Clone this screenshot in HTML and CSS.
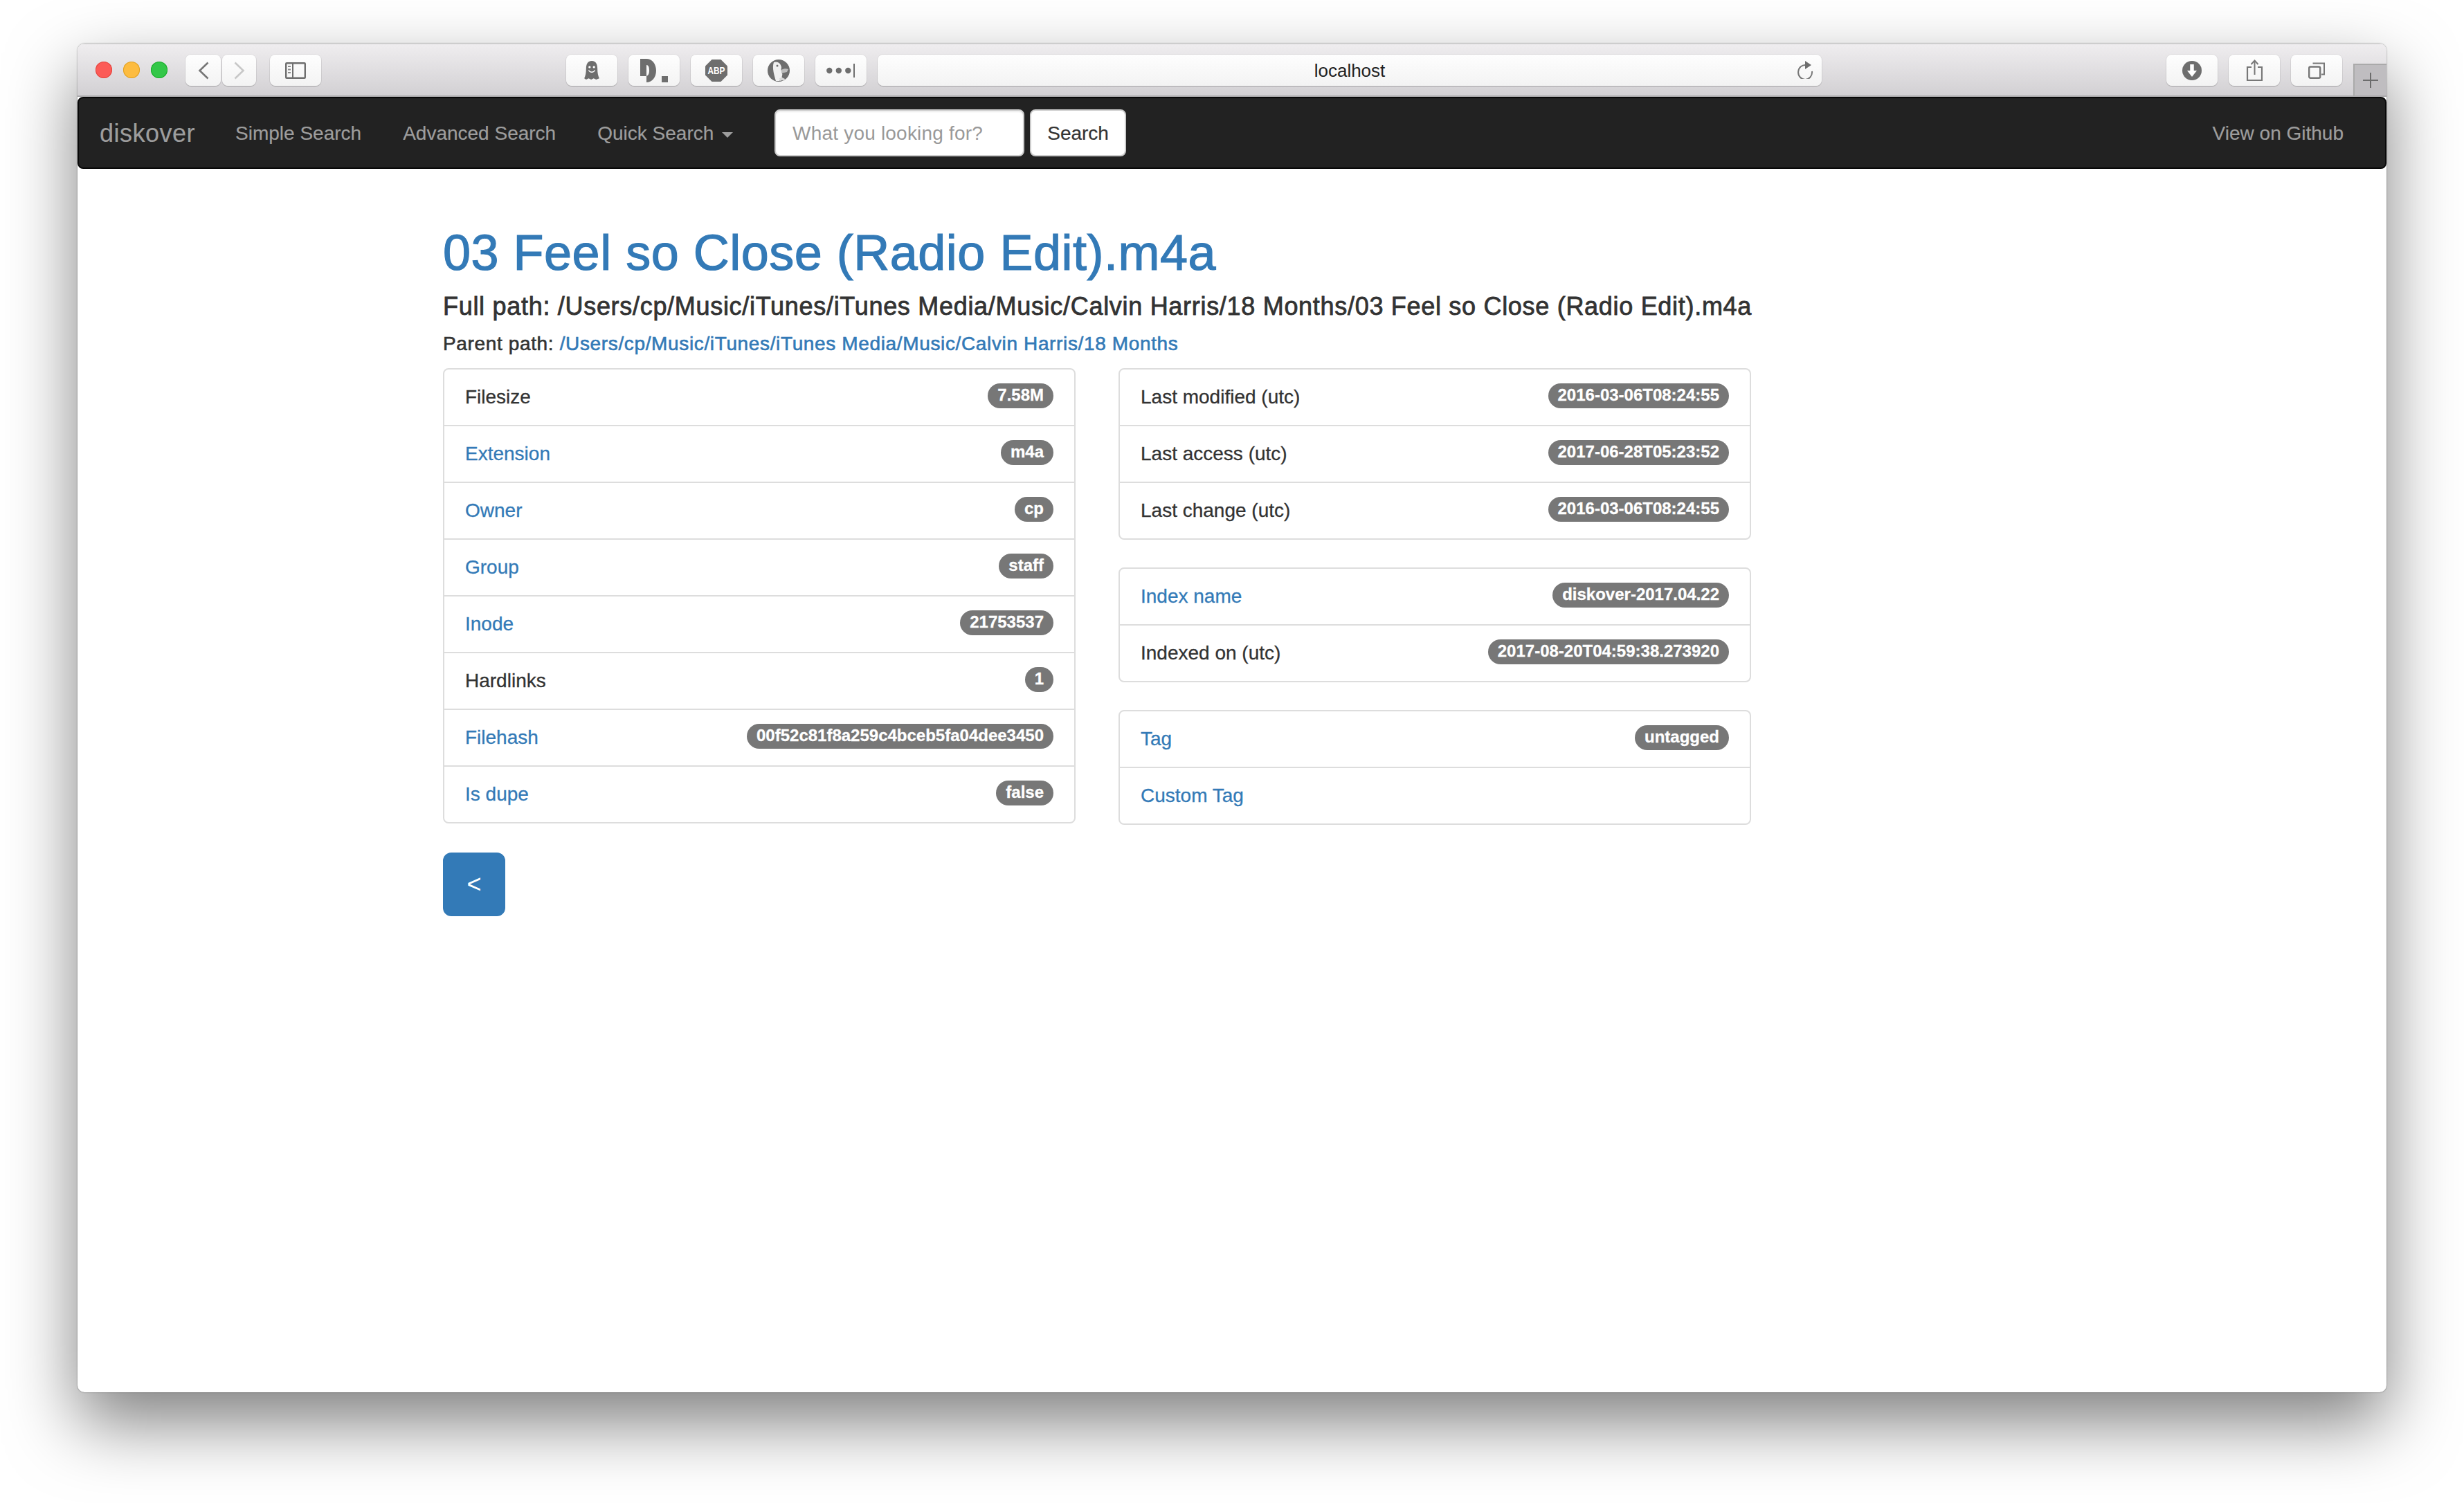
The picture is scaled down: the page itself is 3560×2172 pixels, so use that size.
FILE: index.html
```html
<!DOCTYPE html>
<html lang="en">
<head>
  <meta charset="UTF-8">
  <title>diskover</title>
  <link rel="stylesheet" href="styles.css">
</head>
<body>
  <div class="window">
    <div class="toolbar">
      <div class="lights">
        <span class="light red"></span>
        <span class="light yellow"></span>
        <span class="light green"></span>
      </div>
      <div class="tb-btn nav-btn">
        <svg width="16" height="26" viewBox="0 0 16 26"><path d="M14.5 1.5 L2.5 13 L14.5 24.5" fill="none" stroke="#777" stroke-width="2.6"/></svg>
      </div>
      <div class="tb-btn nav-btn second">
        <svg width="16" height="26" viewBox="0 0 16 26"><path d="M1.5 1.5 L13.5 13 L1.5 24.5" fill="none" stroke="#c8c8c8" stroke-width="2.6"/></svg>
      </div>
      <div class="tb-btn wide sidebar-btn">
        <svg width="30" height="24" viewBox="0 0 30 24"><rect x="1.2" y="1.2" width="27.6" height="21.6" rx="1" fill="none" stroke="#6e6e6e" stroke-width="2.4"/><path d="M11 2V22" stroke="#6e6e6e" stroke-width="2"/><path d="M4 6h4M4 10.5h4M4 15h4" stroke="#8a8a8a" stroke-width="2"/></svg>
      </div>
      <div class="tb-btn wide ext-first">
        <svg width="24" height="29" viewBox="0 0 26 32"><path d="M13 1C6 1 4 7 4 13C4 20 3 25 1 29L4 31L8 29L12 31L16 29L20 31L25 29C23 25 22 20 22 13C22 7 20 1 13 1Z" fill="#6e6e6e"/><circle cx="9.5" cy="11" r="1.8" fill="#fff"/><circle cx="16.5" cy="11" r="1.8" fill="#fff"/><path d="M8 16C10 20 16 20 18 16" fill="none" stroke="#fff" stroke-width="1.5"/></svg>
      </div>
      <div class="tb-btn wide">
        <svg width="40" height="34" viewBox="0 0 40 34"><path d="M0 0H9C17 0 23 7 23 17C23 27 17 34 9 34V25C12 24 13 21 13 17C13 12 12 9 9 9V25H0Z" fill="#6e6e6e"/><rect x="31" y="25" width="9" height="9" fill="#6e6e6e"/></svg>
      </div>
      <div class="tb-btn wide">
        <svg width="32" height="32" viewBox="0 0 32 32"><path d="M9.5 0H22.5L32 9.5V22.5L22.5 32H9.5L0 22.5V9.5Z" fill="#6e6e6e"/><text x="3.5" y="21" class="abp" textLength="25" lengthAdjust="spacingAndGlyphs">ABP</text></svg>
      </div>
      <div class="tb-btn wide">
        <svg width="32" height="32" viewBox="0 0 32 32"><circle cx="16" cy="16" r="16" fill="#6e6e6e"/><path d="M9 4C14 2 19 5 20 11C19 15 20 18 21 20C22 23 20 24 21 27L17 31H12C10 24 6 12 9 4Z" fill="#f0f0f0"/><circle cx="14" cy="9" r="1.5" fill="#6e6e6e"/><path d="M20 15C23 13 27 13 30 14L28 18L20 20Z" fill="#bdbdbd"/><path d="M17 27L21 26L25 28L24 31L21 30L18 31Z" fill="#d8d8d8"/></svg>
      </div>
      <div class="tb-btn wide">
        <svg width="42" height="22" viewBox="0 0 42 22"><circle cx="4.3" cy="11" r="4.2" fill="#6e6e6e"/><circle cx="17.8" cy="11" r="4.2" fill="#6e6e6e"/><circle cx="31.3" cy="11" r="4.2" fill="#6e6e6e"/><path d="M40 1V21" stroke="#6e6e6e" stroke-width="2"/></svg>
      </div>
      <div class="address">
        <span class="address-text">localhost</span>
        <svg class="reload" width="24" height="26" viewBox="0 0 24 26"><path d="M13.5 6A10 10.5 0 1 0 22 15" fill="none" stroke="#777" stroke-width="2"/><path d="M12 0L21 6L12 12Z" fill="#6e6e6e"/></svg>
      </div>
      <div class="tb-btn wide dl-btn">
        <svg width="28" height="28" viewBox="0 0 28 28"><circle cx="14" cy="14" r="14" fill="#6e6e6e"/><path d="M14 5V15" stroke="#fff" stroke-width="5.5"/><path d="M7 14H21L14 23Z" fill="#fff"/></svg>
      </div>
      <div class="tb-btn wide">
        <svg width="24" height="32" viewBox="0 0 24 32"><path d="M8 11H2V30H23V11H17" fill="none" stroke="#777" stroke-width="2.2"/><path d="M12.5 2V22" stroke="#777" stroke-width="2"/><path d="M7.5 7L12.5 1.5L17.5 7" fill="none" stroke="#777" stroke-width="2"/></svg>
      </div>
      <div class="tb-btn wide">
        <svg width="24" height="24" viewBox="0 0 24 24"><rect x="1.2" y="6.5" width="16" height="16.3" rx="2" fill="none" stroke="#777" stroke-width="2.4"/><path d="M6.5 1.5H23V17.5H19" fill="none" stroke="#777" stroke-width="2"/></svg>
      </div>
      <div class="new-tab">
        <svg width="22" height="22" viewBox="0 0 22 22"><path d="M11 0V22M0 11H22" stroke="#6c6c6c" stroke-width="2"/></svg>
      </div>
    </div>

    <nav class="navbar">
      <a class="brand" href="#">diskover</a>
      <a class="nav-link" href="#">Simple Search</a>
      <a class="nav-link" href="#">Advanced Search</a>
      <a class="nav-link" href="#">Quick Search <span class="caret"></span></a>
      <form class="nav-form">
        <input class="search-input" type="text" placeholder="What you looking for?">
        <button class="search-btn" type="button">Search</button>
      </form>
      <a class="nav-link github" href="#">View on Github</a>
    </nav>

    <main class="container">
      <h1 class="title"><a href="#">03 Feel so Close (Radio Edit).m4a</a></h1>
      <h4 class="full-path">Full path: /Users/cp/Music/iTunes/iTunes Media/Music/Calvin Harris/18 Months/03 Feel so Close (Radio Edit).m4a</h4>
      <h5 class="parent-path">Parent path: <a href="#">/Users/cp/Music/iTunes/iTunes Media/Music/Calvin Harris/18 Months</a></h5>

      <div class="columns">
        <div>
          <ul class="list-group">
            <li class="item">Filesize <span class="badge">7.58M</span></li>
            <li class="item"><a href="#">Extension</a> <span class="badge">m4a</span></li>
            <li class="item"><a href="#">Owner</a> <span class="badge">cp</span></li>
            <li class="item"><a href="#">Group</a> <span class="badge">staff</span></li>
            <li class="item"><a href="#">Inode</a> <span class="badge">21753537</span></li>
            <li class="item">Hardlinks <span class="badge">1</span></li>
            <li class="item"><a href="#">Filehash</a> <span class="badge">00f52c81f8a259c4bceb5fa04dee3450</span></li>
            <li class="item"><a href="#">Is dupe</a> <span class="badge">false</span></li>
          </ul>
        </div>
        <div>
          <ul class="list-group">
            <li class="item">Last modified (utc) <span class="badge">2016-03-06T08:24:55</span></li>
            <li class="item">Last access (utc) <span class="badge">2017-06-28T05:23:52</span></li>
            <li class="item">Last change (utc) <span class="badge">2016-03-06T08:24:55</span></li>
          </ul>
          <ul class="list-group">
            <li class="item"><a href="#">Index name</a> <span class="badge">diskover-2017.04.22</span></li>
            <li class="item">Indexed on (utc) <span class="badge">2017-08-20T04:59:38.273920</span></li>
          </ul>
          <ul class="list-group">
            <li class="item"><a href="#">Tag</a> <span class="badge">untagged</span></li>
            <li class="item"><a href="#">Custom Tag</a></li>
          </ul>
        </div>
      </div>

      <button class="back-btn" type="button">&lt;</button>
    </main>
  </div>
</body>
</html>
```

FILE: styles.css
```css
* {
  box-sizing: border-box;
}
html, body {
  height: 100%;
}
body {
  margin: 0;
  padding: 63px 112px 160px;
  background: #fff;
  font-family: "Liberation Sans", Arial, sans-serif;
  font-size: 28px;
  line-height: 40px;
  color: #333;
}
a {
  color: #337ab7;
  text-decoration: none;
}

/* browser window */
.window {
  width: 3336px;
  height: 1949px;
  background: #fff;
  border-radius: 10px;
  box-shadow: 0 44px 100px rgba(0, 0, 0, 0.5), 0 0 2px rgba(0, 0, 0, 0.5);
  overflow: hidden;
}
.toolbar {
  position: relative;
  display: flex;
  align-items: flex-start;
  height: 77px;
  padding: 15px 0 0 26px;
  background: linear-gradient(#efedef, #d2d0d3);
  border-top: 1px solid #d4d4d4;
  border-bottom: 2px solid #a9a8aa;
}
.lights {
  display: flex;
  gap: 16px;
  width: 130px;
  padding-top: 10px;
}
.light {
  width: 24px;
  height: 24px;
  border-radius: 50%;
}
.red { background: #fc5b57; box-shadow: inset 0 0 0 1px #e2463f; }
.yellow { background: #fdbc40; box-shadow: inset 0 0 0 1px #dfa023; }
.green { background: #33c748; box-shadow: inset 0 0 0 1px #1aab29; }

.tb-btn {
  display: flex;
  align-items: center;
  justify-content: center;
  height: 45px;
  background: linear-gradient(#fefefe, #f3f3f3);
  border-radius: 8px;
  box-shadow: 0 0 0 1px rgba(0, 0, 0, 0.05), 0 1px 1px rgba(0, 0, 0, 0.2);
  margin-right: 16px;
}
.nav-btn {
  width: 51px;
  margin-right: 2px;
}
.nav-btn.second {
  width: 49px;
  margin-right: 20px;
}
.wide {
  width: 74px;
}
.sidebar-btn {
  margin-right: 354px;
}
.address {
  position: relative;
  display: flex;
  align-items: center;
  justify-content: center;
  width: 1364px;
  height: 45px;
  margin-right: 498px;
  background: linear-gradient(#fefefe, #f3f3f3);
  border-radius: 8px;
  box-shadow: 0 0 0 1px rgba(0, 0, 0, 0.05), 0 1px 1px rgba(0, 0, 0, 0.2);
}
.address-text {
  padding-top: 2px;
  font-size: 26px;
  line-height: 45px;
  color: #222;
}
.reload {
  position: absolute;
  right: 12px;
  top: 9px;
}
.new-tab {
  position: absolute;
  right: 0;
  bottom: 0;
  display: flex;
  align-items: center;
  justify-content: center;
  width: 48px;
  height: 46px;
  background: #bfbdc0;
  border-top: 2px solid #aaa;
  border-left: 2px solid #aaa;
}
.abp {
  font-size: 14px;
  font-weight: 700;
  fill: #fff;
}

/* navbar */
.navbar {
  display: flex;
  align-items: center;
  height: 104px;
  padding: 2px 30px 0 30px;
  background: #222;
  border: 2px solid #080808;
  border-radius: 8px;
}
.brand {
  font-size: 36px;
  color: #9d9d9d;
  margin-right: 28px;
  letter-spacing: 0.5px;
  -webkit-text-stroke: 0.2px #9d9d9d;
}
.nav-link {
  padding: 0 30px;
  color: #9d9d9d;
  -webkit-text-stroke: 0.2px #9d9d9d;
}
.caret {
  display: inline-block;
  width: 0;
  height: 0;
  margin-left: 4px;
  vertical-align: middle;
  border-top: 8px solid #9d9d9d;
  border-left: 8px solid transparent;
  border-right: 8px solid transparent;
}
.nav-form {
  display: flex;
  gap: 8px;
  margin-left: 30px;
  margin-top: -2px;
}
.search-input {
  width: 361px;
  height: 68px;
  padding: 2px 24px 0;
  border: 2px solid #ccc;
  border-radius: 8px;
  background: #fff;
  font: 28px "Liberation Sans", Arial, sans-serif;
  letter-spacing: 0.2px;
  color: #555;
  box-shadow: inset 0 2px 2px rgba(0, 0, 0, 0.075);
}
.search-input::placeholder {
  color: #999;
  opacity: 1;
}
.search-btn {
  width: 139px;
  height: 68px;
  padding: 2px 0 0;
  border: 2px solid #ccc;
  border-radius: 8px;
  background: #fff;
  font: 28px "Liberation Sans", Arial, sans-serif;
  color: #333;
  -webkit-text-stroke: 0.2px #333;
}
.github {
  margin-left: auto;
}

/* page content */
.container {
  width: 1890px;
  margin-left: 528px;
}
.title {
  margin: 0;
  padding-top: 81px;
  font-size: 72px;
  line-height: 80px;
  font-weight: 400;
  letter-spacing: 0.5px;
  -webkit-text-stroke: 1.2px #337ab7;
}
.full-path {
  margin: 18px 0 0;
  font-size: 36px;
  line-height: 40px;
  font-weight: 400;
  letter-spacing: 0.7px;
  white-space: nowrap;
  -webkit-text-stroke: 0.8px #333;
}
.parent-path {
  margin: 14px 0 0;
  font-size: 28px;
  line-height: 40px;
  font-weight: 400;
  letter-spacing: 0.64px;
  white-space: nowrap;
  -webkit-text-stroke: 0.6px #333;
}
.parent-path a {
  -webkit-text-stroke: 0.6px #337ab7;
}
.columns {
  display: grid;
  grid-template-columns: 914px 914px;
  gap: 62px;
  margin-top: 15px;
}
.list-group {
  margin: 0 0 40px;
  padding: 0;
  list-style: none;
  border: 2px solid #ddd;
  border-radius: 8px;
}
.item {
  padding: 20px 30px;
  height: 82px;
  border-bottom: 2px solid #ddd;
  -webkit-text-stroke: 0.3px;
}
.item:last-child {
  height: 80px;
  border-bottom: 0;
}
.badge {
  float: right;
  height: 36px;
  padding: 0 14px;
  border-radius: 20px;
  background: #777;
  color: #fff;
  font-size: 24px;
  font-weight: 700;
  line-height: 34px;
  -webkit-text-stroke: 0.3px #fff;
}
.back-btn {
  display: block;
  width: 90px;
  height: 92px;
  padding: 0;
  border: 2px solid #337ab7;
  border-radius: 12px;
  background: #337ab7;
  color: #fff;
  font: 36px "Liberation Sans", Arial, sans-serif;
}
```
